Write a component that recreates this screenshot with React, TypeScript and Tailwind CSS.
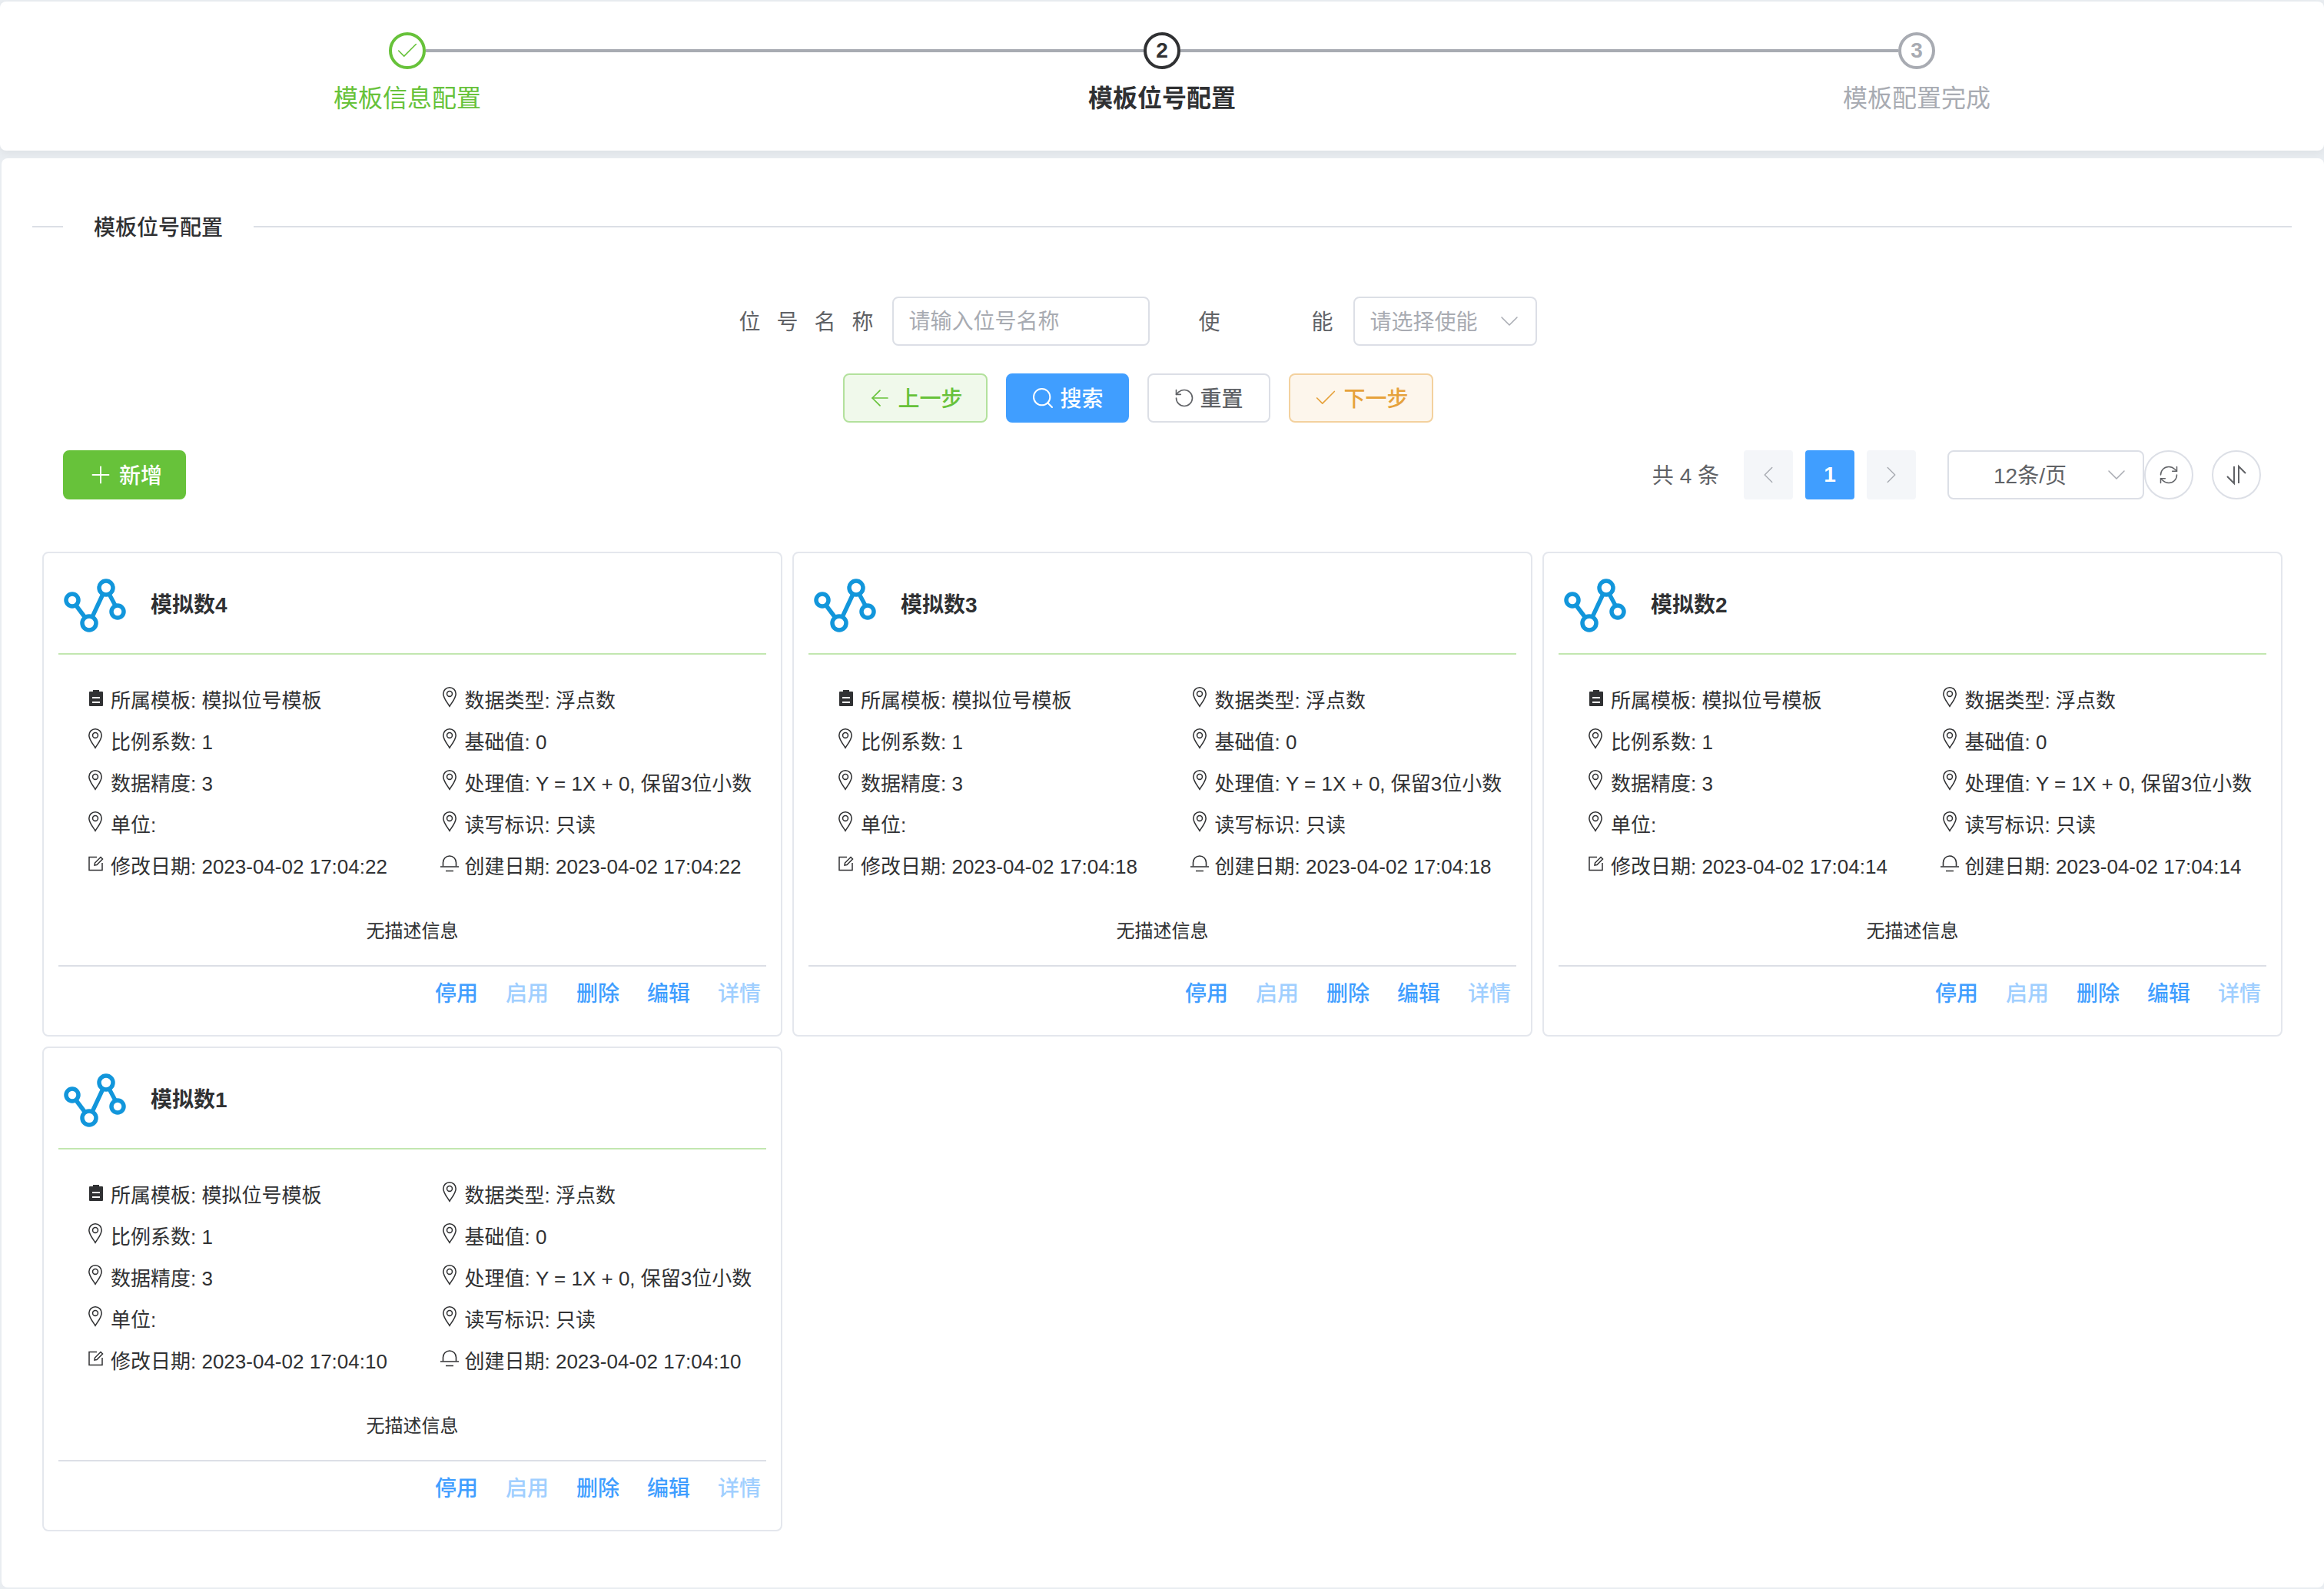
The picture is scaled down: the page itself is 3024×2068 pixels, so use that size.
import type { ReactNode } from "react";
import { ArrowLeft, Check, ChevronDown, ChevronLeft, ChevronRight, Plus, RefreshCw, RotateCcw, Search } from "lucide-react";

const cards = [
  { name: "模拟数4", date: "2023-04-02 17:04:22" },
  { name: "模拟数3", date: "2023-04-02 17:04:18" },
  { name: "模拟数2", date: "2023-04-02 17:04:14" },
  { name: "模拟数1", date: "2023-04-02 17:04:10" },
];

function Logo() {
  return (
    <svg viewBox="0 0 84 72" className="h-[72px] w-[84px]" fill="none" stroke="#1296db" strokeWidth="5.5">
      <path d="M17 36 L29 52 M38 51 L52 21 M60 21 L68 36" />
      <circle cx="12" cy="29" r="8" />
      <circle cx="34" cy="59" r="9" />
      <circle cx="56" cy="13" r="9" />
      <circle cx="71" cy="44" r="8" />
    </svg>
  );
}

function ClipboardIcon() {
  return (
    <svg viewBox="0 0 18 21" className="h-[21px] w-[18px]" fill="#303133">
      <path d="M5 0h8v2h4a1 1 0 0 1 1 1v17a1 1 0 0 1-1 1H1a1 1 0 0 1-1-1V3a1 1 0 0 1 1-1h4z" />
      <path d="M4 9h10v2H4zM4 15h10v2H4z" fill="#fff" />
    </svg>
  );
}

function PinIcon() {
  return (
    <svg viewBox="0 0 22 30" className="-ml-[2px] -translate-y-[1px] h-[28px] w-[20px]" fill="none" stroke="#303133" strokeWidth="1.7">
      <path d="M11 28.5C7 22 2 16.5 2 10.5a9 9 0 0 1 18 0c0 6-5 11.5-9 18z" />
      <circle cx="11" cy="10.5" r="3.8" />
    </svg>
  );
}

function EditIcon() {
  return (
    <svg viewBox="0 0 20 20" className="h-[20px] w-[20px]" fill="none" stroke="#303133" strokeWidth="1.5">
      <path d="M11 1.5H1v17h17V9" />
      <path d="M8 12l.5-3L16 1.5l2.5 2.5L11 11.5z" />
    </svg>
  );
}

function BellIcon() {
  return (
    <svg viewBox="0 0 24 22" className="-ml-[3px] mr-[-1px] h-[22px] w-[24px]" fill="none" stroke="#303133" strokeWidth="1.6">
      <path d="M3.5 14.5V9.5a8.5 8.5 0 0 1 17 0v5" />
      <path d="M0 15h24M7 20.5h10" />
    </svg>
  );
}

function SortIcon() {
  return (
    <svg viewBox="0 0 28 28" className="h-[28px] w-[28px]" fill="none" stroke="#606266" strokeWidth="2">
      <path d="M11 3v22L2 16M17 25V3l9 9" />
    </svg>
  );
}

function InfoRow({ icon, text }: { icon: ReactNode; text: string }) {
  return (
    <div className="flex h-[54px] items-center gap-[8px] pl-[38px] text-[26px] text-[#303133]">
      <span className="flex h-[26px] w-[22px] -translate-y-[4px] items-center justify-center">{icon}</span>
      <span className="whitespace-nowrap">{text}</span>
    </div>
  );
}

function TemplateCard({ name, date }: { name: string; date: string }) {
  return (
    <div className="h-[631px] rounded-[8px] border-2 border-[#e4e7ed] bg-white px-[19px]">
      <div className="flex h-[132px] items-center gap-[30px] border-b-2 border-[#c2e7b0] pl-[6px] pt-[6px]">
        <Logo />
        <span className="text-[28px] font-semibold text-[#303133]">{name}</span>
      </div>
      <div className="grid grid-cols-2 pt-[33px]">
        <InfoRow icon={<ClipboardIcon />} text="所属模板: 模拟位号模板" />
        <InfoRow icon={<PinIcon />} text="数据类型: 浮点数" />
        <InfoRow icon={<PinIcon />} text="比例系数: 1" />
        <InfoRow icon={<PinIcon />} text="基础值: 0" />
        <InfoRow icon={<PinIcon />} text="数据精度: 3" />
        <InfoRow icon={<PinIcon />} text="处理值: Y = 1X + 0, 保留3位小数" />
        <InfoRow icon={<PinIcon />} text="单位:" />
        <InfoRow icon={<PinIcon />} text="读写标识: 只读" />
        <InfoRow icon={<EditIcon />} text={`修改日期: ${date}`} />
        <InfoRow icon={<BellIcon />} text={`创建日期: ${date}`} />
      </div>
      <div className="flex h-[103px] items-center justify-center border-b-2 border-[#dcdfe6] pt-[13px] text-[24px] text-[#303133]">
        无描述信息
      </div>
      <div className="flex h-[72px] items-center justify-end gap-[36px] pr-[7px] text-[28px] font-medium">
        <span className="text-[#409eff]">停用</span>
        <span className="text-[#a0cfff]">启用</span>
        <span className="text-[#409eff]">删除</span>
        <span className="text-[#409eff]">编辑</span>
        <span className="text-[#a0cfff]">详情</span>
      </div>
    </div>
  );
}

function Step({ index, label, state }: { index: number; label: string; state: "done" | "active" | "wait" }) {
  const ring = state === "done" ? "border-[#67c23a]" : state === "active" ? "border-[#303133] text-[#303133]" : "border-[#a8abb2] text-[#a8abb2]";
  const text = state === "done" ? "text-[#67c23a]" : state === "active" ? "font-semibold text-[#303133]" : "text-[#a8abb2]";
  return (
    <div className="flex w-[982px] flex-col items-center">
      <div className="flex h-[48px] w-full items-center">
        <div className={`h-[4px] flex-1 ${index === 1 ? "bg-transparent" : "bg-[#a8abb2]"}`} />
        <div className={`flex h-[48px] w-[48px] items-center justify-center rounded-full border-[4px] text-[28px] font-semibold ${ring}`}>
          {state === "done" ? <Check size={34} strokeWidth={1.1} color="#67c23a" /> : index}
        </div>
        <div className={`h-[4px] flex-1 ${index === 3 ? "bg-transparent" : "bg-[#a8abb2]"}`} />
      </div>
      <div className={`mt-[16px] text-[32px] leading-[44px] ${text}`}>{label}</div>
    </div>
  );
}

function ActionButton({ className, icon, label }: { className: string; icon: ReactNode; label: string }) {
  return (
    <button className={`flex h-[64px] items-center justify-center gap-[6px] rounded-[8px] border-2 text-[28px] font-medium ${className}`}>
      {icon}
      <span className="pt-[4px]">{label}</span>
    </button>
  );
}

export default function App() {
  return (
    <div className="h-[2068px] w-[3024px] overflow-hidden bg-[#e9edf1] pt-[2px] font-['Liberation_Sans','Noto_Sans_CJK_SC',sans-serif] text-[#303133]">
      <header className="flex h-[194px] rounded-[8px] bg-white pl-[39px] pt-[40px] shadow-[0_4px_12px_rgba(0,0,0,0.05)]">
        <Step index={1} label="模板信息配置" state="done" />
        <Step index={2} label="模板位号配置" state="active" />
        <Step index={3} label="模板配置完成" state="wait" />
      </header>

      <main className="ml-[2px] mt-[10px] h-[1860px] rounded-[8px] bg-white pt-[69px]">
        <div className="flex h-[40px] items-center pl-[40px] pr-[42px]">
          <div className="h-[2px] w-[40px] bg-[#dcdfe6]" />
          <div className="pl-[40px] pr-[40px] pt-[3px] text-[28px] font-medium">模板位号配置</div>
          <div className="h-[2px] flex-1 bg-[#dcdfe6]" />
        </div>

        <div className="mr-[65px] mt-[71px] flex justify-center text-[28px] text-[#606266]">
          <label className="flex h-[64px] w-[175px] items-center whitespace-nowrap pt-[3px]">
            <span className="w-full [text-align-last:justify]">位号名称</span>
          </label>
          <input
            placeholder="请输入位号名称"
            className="ml-[24px] h-[64px] w-[335px] rounded-[8px] border-2 border-[#dcdfe6] bg-white px-[20px] pt-[2px] text-[28px] placeholder:text-[#a8abb2]"
          />
          <label className="ml-[64px] flex h-[64px] w-[175px] items-center whitespace-nowrap pt-[3px]">
            <span className="w-full [text-align-last:justify]">使能</span>
          </label>
          <div className="ml-[26px] flex h-[64px] w-[239px] items-center justify-between rounded-[8px] border-2 border-[#dcdfe6] pl-[20px] pr-[20px] text-[#a8abb2]">
            <span className="pt-[3px]">请选择使能</span>
            <ChevronDown size={40} strokeWidth={0.9} className="-mr-[6px]" />
          </div>
        </div>

        <div className="mr-[65px] mt-[36px] flex justify-center gap-[24px]">
          <ActionButton className="w-[188px] border-[#b3e19d] bg-[#f0f9eb] text-[#67c23a]" icon={<ArrowLeft size={34} strokeWidth={1.2} />} label="上一步" />
          <ActionButton className="w-[160px] border-[#409eff] bg-[#409eff] text-white" icon={<Search size={32} strokeWidth={1.5} />} label="搜索" />
          <ActionButton className="w-[160px] border-[#dcdfe6] bg-white text-[#606266]" icon={<RotateCcw size={28} strokeWidth={1.4} />} label="重置" />
          <ActionButton className="w-[188px] border-[#f3d19e] bg-[#fdf6ec] text-[#e6a23c]" icon={<Check size={34} strokeWidth={1.2} />} label="下一步" />
        </div>

        <div className="ml-[80px] mr-[82px] mt-[36px] flex items-center justify-between">
          <ActionButton className="w-[160px] border-[#67c23a] bg-[#67c23a] text-white" icon={<Plus size={36} strokeWidth={1.2} />} label="新增" />
          <div className="flex items-center text-[28px] text-[#606266]">
            <span className="mr-[32px] pt-[3px]">共 4 条</span>
            <div className="flex h-[64px] w-[64px] items-center justify-center rounded-[4px] bg-[#f4f6f9] text-[#a8abb2]">
              <ChevronLeft size={38} strokeWidth={0.9} />
            </div>
            <div className="ml-[16px] flex h-[64px] w-[64px] items-center justify-center rounded-[4px] bg-[#409eff] font-bold text-white">1</div>
            <div className="ml-[16px] flex h-[64px] w-[64px] items-center justify-center rounded-[4px] bg-[#f4f6f9] text-[#a8abb2]">
              <ChevronRight size={38} strokeWidth={0.9} />
            </div>
            <div className="ml-[41px] flex h-[64px] w-[256px] items-center justify-between rounded-[8px] border-2 border-[#dcdfe6] pl-[58px] pr-[20px]">
              <span className="pt-[3px]">12条/页</span>
              <ChevronDown size={40} strokeWidth={0.9} color="#a8abb2" className="-mr-[6px]" />
            </div>
            <div className="flex h-[64px] w-[64px] items-center justify-center rounded-full border-2 border-[#dcdfe6]">
              <RefreshCw size={28} strokeWidth={1.3} />
            </div>
            <div className="ml-[24px] flex h-[64px] w-[64px] items-center justify-center rounded-full border-2 border-[#dcdfe6]">
              <SortIcon />
            </div>
          </div>
        </div>

        <div className="ml-[53px] mt-[68px] grid grid-cols-[repeat(3,963px)] gap-[13px]">
          {cards.map((card) => (
            <TemplateCard key={card.name} name={card.name} date={card.date} />
          ))}
        </div>
      </main>
    </div>
  );
}
